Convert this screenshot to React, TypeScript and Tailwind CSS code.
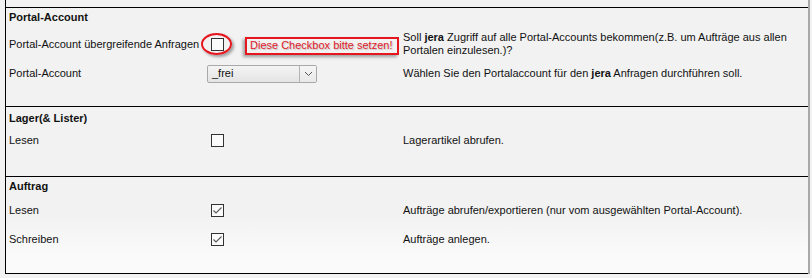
import React from "react";

function CheckBox({ checked = false }: { checked?: boolean }) {
  return (
    <div className="ml-[4px] w-[13px] h-[13px] border border-[#333333] bg-[#fbfbfb] flex items-center justify-center">
      {checked && (
        <svg width="11" height="11" viewBox="0 0 11 11">
          <path d="M1.5 5.5 L4 8 L9.5 2.5" fill="none" stroke="#5a5a5a" strokeWidth="1.1" />
        </svg>
      )}
    </div>
  );
}

function Row({
  label,
  control,
  desc,
  h,
  extra = "",
}: {
  label: React.ReactNode;
  control: React.ReactNode;
  desc: React.ReactNode;
  h: string;
  extra?: string;
}) {
  return (
    <div className={`grid grid-cols-[198px_196px_400px] items-center pl-[3px] ${h} ${extra}`}>
      <div className="whitespace-nowrap">{label}</div>
      <div className="relative flex items-center">{control}</div>
      <div>{desc}</div>
    </div>
  );
}

export default function App() {
  return (
    <div className="w-[812px] h-[278px] overflow-hidden bg-[#f2f2f2] font-['Liberation_Sans',Arial,sans-serif] text-[11px] leading-[13px] text-[#111111]">
      <div className="ml-[5px] w-[805px] border-l border-l-black border-r-2 border-r-[#a8a8a8] pt-[7px] bg-[#f2f2f2]">
        {/* Section 1 */}
        <div className="h-[99px] border-t border-black">
          <div className="pl-[3px] pt-[3px] font-bold">Portal-Account</div>
          <Row
            h="h-[40px]"
            label="Portal-Account übergreifende Anfragen"
            control={
              <>
                <CheckBox />
                <div className="absolute left-[-6px] top-[-5px] w-[31px] h-[22px] rounded-[50%] border-2 border-[#e5161e] shadow-[2px_2px_3px_rgba(0,0,0,0.35)]" />
                <div className="absolute left-[38px] top-[-1px] w-[154px] h-[18px] border-2 border-[#e5161e] shadow-[-2px_2px_3px_rgba(0,0,0,0.35)] flex items-center pl-[3px] text-[#e0202a] whitespace-nowrap [text-shadow:1px_1px_1px_rgba(0,0,0,0.2)]">
                  Diese Checkbox bitte setzen!
                </div>
              </>
            }
            desc={
              <>
                Soll <b>jera</b> Zugriff auf alle Portal-Accounts bekommen(z.B. um Aufträge aus allen Portalen einzulesen.)?
              </>
            }
          />
          <Row
            h="h-[19px]"
            label="Portal-Account"
            control={
              <div className="w-[110px] h-[18px] flex border border-[#a9a9a9] rounded-[2px] bg-linear-to-b from-[#f4f4f4] to-[#e4e4e4]">
                <div className="flex-1 pl-[4px] flex items-center">_frei</div>
                <div className="w-[17px] h-full border-l border-[#b4b4b4] bg-linear-to-b from-[#f6f6f6] to-[#e8e8e8] flex items-center justify-center">
                  <svg width="9" height="6" viewBox="0 0 9 6">
                    <path d="M1 1 L4.5 4.5 L8 1" fill="none" stroke="#555" strokeWidth="1" />
                  </svg>
                </div>
              </div>
            }
            desc={
              <>
                Wählen Sie den Portalaccount für den <b>jera</b> Anfragen durchführen soll.
              </>
            }
          />
        </div>

        {/* Section 2 */}
        <div className="h-[70px] border-t border-black">
          <div className="pl-[3px] pt-[5px] font-bold">Lager(&amp; Lister)</div>
          <Row h="h-[29px]" extra="mt-[1px]" label="Lesen" control={<CheckBox />} desc="Lagerartikel abrufen." />
        </div>

        {/* Section 3 */}
        <div className="h-[98px] border-t border-b border-black bg-linear-to-b from-[#f2f2f2] from-40% to-[#fafafa] to-80%">
          <div className="pl-[3px] pt-[3px] font-bold">Auftrag</div>
          <Row
            h="h-[29px]"
            extra="mt-[3px]"
            label="Lesen"
            control={<CheckBox checked />}
            desc="Aufträge abrufen/exportieren (nur vom ausgewählten Portal-Account)."
          />
          <Row h="h-[29px]" label="Schreiben" control={<CheckBox checked />} desc="Aufträge anlegen." />
        </div>
      </div>
    </div>
  );
}
